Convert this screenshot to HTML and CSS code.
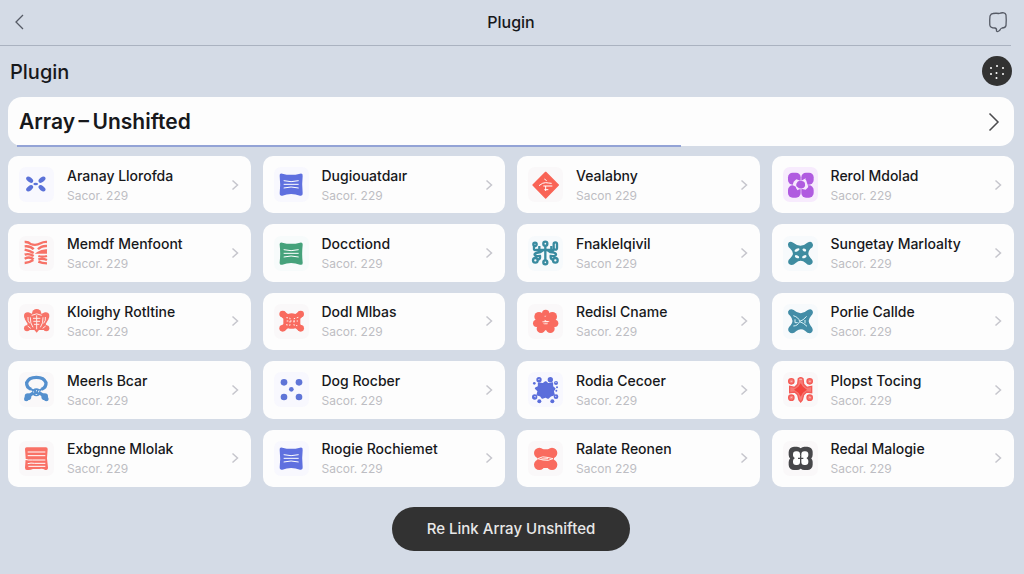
FILE: index.html
```html
<!DOCTYPE html>
<html lang="en">
<head>
<meta charset="utf-8">
<meta name="viewport" content="width=device-width, initial-scale=1">
<title>Plugin</title>
<link rel="stylesheet" href="styles.css">
</head>
<body>
<svg class="defs" aria-hidden="true">
  <symbol id="chevron" viewBox="0 0 8 12"><path d="M1.500 1.500 6.500 6l-5 4.500"/></symbol>
  <symbol id="scroll" viewBox="0 0 105 105">
    <path fill="currentColor" d="M17 26Q16 18 25 20Q51 27 78 20Q87 18 86 27Q83 52 86 79Q87 88 78 86Q51 76 25 86Q16 88 17 79Q20 52 17 26Z"/>
    <path class="cut" d="M29 41Q51 47 74 41M29 52H74M29 63Q51 57 74 63"/>
  </symbol>
</svg>
<div class="page">
  <header class="topbar">
    <button class="icon-button" type="button" aria-label="Back"><svg width="12" height="18" viewBox="0 0 12 18"><path d="M9 2 2 9 9 16"/></svg></button>
    <span class="topbar-title">Plugin</span>
    <button class="icon-button" type="button" aria-label="Messages"><svg width="20" height="22" viewBox="0 0 20 22"><path d="M5 2.500Q8 2 11 2.500Q17 .5 18 4Q18.500 9 18 14.500Q17.500 17 14 17Q12.500 17.500 12 19Q9.500 21.500 8.500 20Q9 17.500 7 17Q2 17 1.800 14Q1.500 9 2 5Q3 2.500 5 2.500Z"/></svg></button>
  </header>
  <div class="heading">
    <h1>Plugin</h1>
    <button class="round" type="button" aria-label="More options"><svg width="30" height="30" viewBox="0 0 30 30" fill="#fff"><circle cx="9" cy="12" r="1"/><circle cx="15" cy="10" r="1"/><circle cx="21" cy="12" r="1"/><circle cx="9" cy="18" r="1"/><circle cx="14.500" cy="17" r="1"/><circle cx="21" cy="18" r="1"/><circle cx="14.500" cy="22" r="1"/></svg></button>
  </div>
  <a class="banner" href="#"><span>Array&thinsp;–&thinsp;Unshifted</span><svg width="12" height="20" viewBox="0 0 12 20"><path d="M1.500 1.500 10 10 1.500 18.500"/></svg></a>
  <main class="grid">
    <a class="card" href="#"><svg class="tile lilac" viewBox="0 0 105 105" fill="#5b72d8"><ellipse cx="32" cy="38" rx="12" ry="7" transform="rotate(38 32 38)"/><ellipse cx="69" cy="38" rx="12" ry="7" transform="rotate(-38 69 38)"/><ellipse cx="32" cy="64" rx="12" ry="7" transform="rotate(-38 32 64)"/><ellipse cx="69" cy="64" rx="12" ry="7" transform="rotate(38 69 64)"/><ellipse cx="50" cy="51" rx="7" ry="4"/></svg><span class="text"><b>Aranay Llorofda</b><small>Sacor. 229</small></span><svg class="chev"><use href="#chevron"/></svg></a>
    <a class="card" href="#"><svg class="tile lilac indigo" viewBox="0 0 105 105"><use href="#scroll"/></svg><span class="text"><b>Dugiouatdaır</b><small>Sacor. 229</small></span><svg class="chev"><use href="#chevron"/></svg></a>
    <a class="card" href="#"><svg class="tile" viewBox="0 0 105 105"><path fill="#f96456" stroke="#f96456" stroke-width="4" stroke-linejoin="round" d="M53 16 91 54 53 93 15 54Z"/><path class="cut" d="M49 36 56 41M33 56Q45 46 53 47T71 49M46 57H73M53 57V72M49 68H61"/></svg><span class="text"><b>Vealabny</b><small>Sacon 229</small></span><svg class="chev"><use href="#chevron"/></svg></a>
    <a class="card" href="#"><svg class="tile violet" viewBox="0 0 105 105"><g fill="#b05be0"><rect x="15" y="17" width="38" height="36" rx="14"/><rect x="55" y="17" width="37" height="36" rx="14"/><rect x="15" y="55" width="38" height="37" rx="14"/><rect x="55" y="55" width="37" height="37" rx="14"/></g><path fill="#f7e9fd" d="M32 44 40 37 54 42 68 34 72 48 76 60 68 68 54 65 42 70 38 59 29 54Z"/><path fill="#b05be0" d="M40 50Q45 39 53 42Q64 40 66 50Q68 61 58 64Q49 66 43 60Q38 57 40 50ZM66 36 72 34V41ZM37 64V72L43 69Z"/></svg><span class="text"><b>Rerol Mdolad</b><small>Sacor. 229</small></span><svg class="chev"><use href="#chevron"/></svg></a>

    <a class="card" href="#"><svg class="tile" viewBox="0 0 105 105" fill="none" stroke="#f77267" stroke-width="7"><path d="M17 18Q28 17 35 24Q50 30 65 22Q74 17 84 18M17 31Q35 29 44 40M84 30Q66 29 57 40M17 41Q34 45 44 51M84 43Q69 42 58 50H84M17 56Q30 51 44 60M58 60Q70 64 84 60M17 68Q32 60 44 70M84 72Q71 66 58 70M17 81Q31 80 43 72M84 82Q69 82 58 77"/></svg><span class="text"><b>Memdf Menfoont</b><small>Sacor. 229</small></span><svg class="chev"><use href="#chevron"/></svg></a>
    <a class="card" href="#"><svg class="tile mint" viewBox="0 0 105 105"><use href="#scroll"/></svg><span class="text"><b>Docctiond</b><small>Sacor. 229</small></span><svg class="chev"><use href="#chevron"/></svg></a>
    <a class="card" href="#"><svg class="tile ice" viewBox="0 0 105 105" fill="none" stroke="#398ba0" stroke-width="7"><circle cx="21" cy="25" r="5"/><circle cx="52" cy="23" r="6"/><rect x="77" y="19" width="10" height="22" rx="5"/><circle cx="22" cy="73" r="7"/><circle cx="52" cy="79" r="6"/><circle cx="82" cy="73" r="7"/><path d="M18 29V40Q19 43 26 42H78M52 30V72M28 71Q38 71 36 60Q18 62 20 54Q24 50 38 48L46 42M58 42 66 48Q84 50 84 55Q84 62 68 60Q67 71 76 71M34 40V30M70 40V30"/></svg><span class="text"><b>Fnaklelqivil</b><small>Sacon 229</small></span><svg class="chev"><use href="#chevron"/></svg></a>
    <a class="card" href="#"><svg class="tile ice" viewBox="0 0 105 105"><path fill="#3e8ca0" d="M15 24Q18 12 32 21Q53 38 73 20Q87 12 90 26Q91 33 82 38Q70 52 82 65Q94 76 86 84Q77 92 68 81Q53 67 38 81Q28 92 18 84Q11 75 23 65Q37 52 22 38Q14 33 15 24Z"/><g fill="#f3fafb"><ellipse cx="42" cy="42" rx="8" ry="4" transform="rotate(-25 42 42)"/><ellipse cx="64" cy="42" rx="6" ry="4" transform="rotate(30 64 42)"/><ellipse cx="42" cy="62" rx="7" ry="4" transform="rotate(25 42 62)"/><ellipse cx="64" cy="62" rx="7" ry="4" transform="rotate(-25 64 62)"/></g></svg><span class="text"><b>Sungetay Marloalty</b><small>Sacor. 229</small></span><svg class="chev"><use href="#chevron"/></svg></a>

    <a class="card" href="#"><svg class="tile" viewBox="0 0 105 105"><g fill="#f77368"><circle cx="53" cy="29" r="14"/><circle cx="26" cy="36" r="11"/><circle cx="80" cy="36" r="11"/><circle cx="24" cy="73" r="9"/><circle cx="82" cy="73" r="9"/><path d="M27 26 42 30H64L79 26 89 45 80 60 86 70 75 78 60 78 53 86 46 78 31 78 20 70 26 60 17 45Z"/></g><path fill="none" stroke="#fdebe8" stroke-width="3" d="M38 34Q53 25 68 34M34 40Q33 58 42 70M72 40Q73 58 64 70M53 34V76M42 43H64M43 52H63M45 61H61M27 39Q25 50 32 58M79 39Q81 50 74 58M26 66 35 73M80 66 71 73"/></svg><span class="text"><b>Kloiıghy Rotltine</b><small>Sacor. 229</small></span><svg class="chev"><use href="#chevron"/></svg></a>
    <a class="card" href="#"><svg class="tile" viewBox="0 0 105 105"><g fill="#f96b5f"><circle cx="26" cy="30" r="10"/><circle cx="80" cy="30" r="10"/><circle cx="26" cy="73" r="10"/><circle cx="80" cy="73" r="10"/><path d="M30 22 42 30Q53 25 64 30L76 22 87 37 79 44V61L87 68 77 82 64 73Q53 76 42 73L30 82 19 68 28 60V44L19 36Z"/></g><path fill="none" stroke="#fff0ec" stroke-width="3" stroke-dasharray="5 5" d="M37 41 48 42V64L36 62M73 40 60 44V64L70 65M38 51H72"/></svg><span class="text"><b>Dodl Mlbas</b><small>Sacor. 229</small></span><svg class="chev"><use href="#chevron"/></svg></a>
    <a class="card" href="#"><svg class="tile" viewBox="0 0 105 105"><g fill="#f96b5f"><circle cx="53" cy="28" r="11"/><circle cx="33" cy="38" r="14"/><circle cx="73" cy="38" r="14"/><circle cx="26" cy="58" r="11"/><circle cx="80" cy="58" r="11"/><circle cx="39" cy="74" r="13"/><circle cx="67" cy="74" r="13"/><circle cx="53" cy="54" r="25"/></g><path fill="#fff1ed" d="M41 54Q45 51 50 52V47L56 51Q62 50 65 53Q54 56 41 54ZM44 59Q55 56 61 59Q54 63 44 59ZM48 36 55 35 52 38Z"/></svg><span class="text"><b>Redisl Cname</b><small>Sacor. 229</small></span><svg class="chev"><use href="#chevron"/></svg></a>
    <a class="card" href="#"><svg class="tile ice" viewBox="0 0 105 105"><path fill="#438da7" d="M15 23Q20 12 32 18Q53 37 73 19Q87 11 90 24Q90 31 84 36Q71 50 83 65Q93 76 87 84Q79 93 66 80Q53 71 40 81Q28 93 18 83Q11 75 23 64Q34 50 22 36Q14 31 15 23Z"/><path fill="none" stroke="#d9f3f8" stroke-width="3" d="M31 35Q47 40 50 52Q60 50 71 37M31 66Q44 66 50 53Q61 56 72 67M36 46V56H44M66 48V58"/></svg><span class="text"><b>Porlie Callde</b><small>Sacor. 229</small></span><svg class="chev"><use href="#chevron"/></svg></a>

    <a class="card" href="#"><svg class="tile" viewBox="0 0 105 105"><g fill="none" stroke="#5590ce" stroke-width="10"><path d="M36 52Q22 46 23 32Q29 16 52 16Q75 16 81 32Q82 46 68 52"/><path d="M26 74 49 59M79 74 55 59"/><path stroke-width="6" d="M33 50 44 56M71 50 60 56"/></g><g fill="#5590ce"><circle cx="52" cy="61" r="12"/><circle cx="27" cy="74" r="10"/><circle cx="77" cy="74" r="10"/><circle cx="22" cy="81" r="7"/><circle cx="82" cy="81" r="7"/></g><path fill="#f7fafd" d="M42 57 46 60 44 63ZM57 57 62 55 59 62ZM48 66H56L52 69ZM51 55H54V58H51Z"/></svg><span class="text"><b>Meerls Bcar</b><small>Sacor. 229</small></span><svg class="chev"><use href="#chevron"/></svg></a>
    <a class="card" href="#"><svg class="tile lilac" viewBox="0 0 105 105" fill="#5f75d7"><circle cx="30" cy="31" r="10"/><circle cx="75" cy="31" r="10"/><circle cx="52" cy="52" r="7"/><circle cx="30" cy="75" r="10"/><circle cx="75" cy="75" r="10"/></svg><span class="text"><b>Dog Rocber</b><small>Sacor. 229</small></span><svg class="chev"><use href="#chevron"/></svg></a>
    <a class="card" href="#"><svg class="tile lilac" viewBox="0 0 105 105" fill="#5b6edb"><path d="M53 30 60 36 73 33 73 44 80 50 75 57 78 68 68 71 60 78 53 74 43 78 38 71 28 68 31 57 23 49 32 44 32 33 45 36Z" stroke="#5b6edb" stroke-width="5" stroke-linejoin="round"/><circle cx="33" cy="23" r="8"/><circle cx="67" cy="23" r="8"/><circle cx="19" cy="34" r="4"/><circle cx="84" cy="33" r="6"/><circle cx="20" cy="75" r="8"/><circle cx="84" cy="74" r="7"/><circle cx="34" cy="88" r="6"/><circle cx="73" cy="88" r="6"/><circle cx="87" cy="46" r="3"/><circle cx="85" cy="56" r="3"/><path fill="#f4f4ff" d="M29 22 35 20 34 24ZM18 73 23 72 22 77ZM82 29 87 31 83 33ZM82 71 86 73 82 76Z"/></svg><span class="text"><b>Rodia Cecoer</b><small>Sacor. 229</small></span><svg class="chev"><use href="#chevron"/></svg></a>
    <a class="card" href="#"><svg class="tile" viewBox="0 0 105 105"><g fill="#f77b76" stroke="#f45b56" stroke-width="4"><circle cx="25" cy="28" r="8"/><circle cx="80" cy="28" r="8"/><circle cx="25" cy="77" r="8"/><circle cx="80" cy="77" r="8"/><path d="M46 20Q53 14 60 20L62 37 71 46 86 43V62L71 60 62 68 58 84 53 90 48 84 44 68 35 60 20 62V43L35 46 44 37Z"/></g><path fill="#f3463f" d="M53 34 60 44 72 53 60 62 53 74 46 62 33 53 46 44Z"/><path fill="none" stroke="#fde6e4" stroke-width="2" d="M23 28H28M78 28H83M23 77 28 75M78 75 83 77M49 22H57"/></svg><span class="text"><b>Plopst Tocing</b><small>Sacor. 229</small></span><svg class="chev"><use href="#chevron"/></svg></a>

    <a class="card" href="#"><svg class="tile" viewBox="0 0 105 105"><path fill="#f97166" d="M18 24Q18 18 25 19H79Q86 18 86 24L84 52 87 80Q87 87 79 87Q70 82 62 84H42Q34 88 25 87Q18 88 18 80L20 52Z"/><path class="cut" d="M26 33H79M26 44H79M18 55Q28 58 40 57H79M26 68Q36 65 46 67H79M28 76H79"/></svg><span class="text"><b>Exbgnne Mlolak</b><small>Sacor. 229</small></span><svg class="chev"><use href="#chevron"/></svg></a>
    <a class="card" href="#"><svg class="tile lilac indigo" viewBox="0 0 105 105"><use href="#scroll"/></svg><span class="text"><b>Rıogie Rochiemet</b><small>Sacor. 229</small></span><svg class="chev"><use href="#chevron"/></svg></a>
    <a class="card" href="#"><svg class="tile" viewBox="0 0 105 105"><g fill="#f96b5f"><circle cx="34" cy="36" r="16"/><circle cx="72" cy="36" r="16"/><circle cx="34" cy="71" r="16"/><circle cx="72" cy="71" r="16"/><path d="M35 25H71L78 53 70 81H36L28 53Z"/></g><path fill="none" stroke="#fff1ed" stroke-width="3" d="M29 53Q45 44 57 49L75 53Q61 61 45 57ZM40 54 60 53"/></svg><span class="text"><b>Ralate Reonen</b><small>Sacon 229</small></span><svg class="chev"><use href="#chevron"/></svg></a>
    <a class="card" href="#"><svg class="tile" viewBox="0 0 105 105"><g fill="#47474a"><rect x="17" y="17" width="41" height="40" rx="16"/><rect x="48" y="17" width="41" height="40" rx="16"/><rect x="17" y="47" width="41" height="40" rx="16"/><rect x="48" y="47" width="41" height="40" rx="16"/></g><g fill="#fff"><rect x="30" y="31" width="21" height="20" rx="9"/><rect x="55" y="31" width="21" height="20" rx="9"/><rect x="30" y="52" width="21" height="20" rx="9"/><rect x="55" y="52" width="21" height="20" rx="9"/><path d="M35 44H71V60H35Z"/></g><path stroke="#47474a" stroke-width="4" d="M45 52H61M53 44V60"/></svg><span class="text"><b>Redal Malogie</b><small>Sacor. 229</small></span><svg class="chev"><use href="#chevron"/></svg></a>
  </main>
  <footer class="footer"><button class="primary" type="button">Re Link Array Unshifted</button></footer>
</div>
</body>
</html>
```
FILE: styles.css
```css
* { box-sizing: border-box; }
body {
  margin: 0;
  background: #d4dbe6;
  color: #17181b;
  font-family: Inter, "Liberation Sans", sans-serif;
}
a { color: inherit; text-decoration: none; }
button { border: 0; padding: 0; background: none; color: inherit; font: inherit; cursor: pointer; }
svg { display: block; flex: none; }
.defs { position: absolute; width: 0; height: 0; }
.page { display: flex; flex-direction: column; min-height: 100vh; padding: 0 10px 0 8px; }

.topbar {
  display: grid;
  grid-template-columns: 1fr auto 1fr;
  align-items: center;
  height: 46px;
  margin: 0 3px 0 -8px;
  padding: 0 3px 2px 14px;
  border-bottom: 1px solid #aab2c0;
}
.icon-button:last-child { justify-self: end; }
.icon-button:first-child { justify-self: start; }
.icon-button svg { fill: none; stroke: #555a65; stroke-width: 1.3; }
.topbar-title { font-size: 16px; font-weight: 500; }

.heading { display: flex; align-items: center; justify-content: space-between; height: 51px; padding: 0 2px 2px; }
h1 { margin: 3px 0 0; font-size: 20px; line-height: 24px; font-weight: 500; }
.round { border-radius: 50%; background: #323232; }

.banner {
  position: relative;
  display: flex;
  align-items: center;
  justify-content: space-between;
  height: 49px;
  padding: 0 14px 0 11px;
  border-radius: 14px;
  background: #fdfdfd;
  font-size: 21px;
  font-weight: 600;
}
.banner svg { fill: none; stroke: #4b4b4e; stroke-width: 1.5; }
.banner::after {
  content: "";
  position: absolute;
  left: 9px;
  bottom: -1px;
  width: 66%;
  height: 2px;
  background: #93a3d6;
}

.grid {
  display: grid;
  flex: 1;
  grid-template-columns: repeat(4, 1fr);
  grid-auto-rows: 1fr;
  gap: 11px 12px;
  padding: 10px 0 20px;
}
.card {
  display: flex;
  align-items: center;
  min-width: 0;
  padding: 0 12px 0 11px;
  border-radius: 10px;
  background: #fdfdfd;
}
.tile { width: 35px; height: 35px; border-radius: 7px; background: #faf8f9; }
.lilac { background: #f8f8fe; }
.indigo { color: #5f70df; }
.mint { color: #45a27b; background: #f7fbfb; }
.ice { background: #f7fafc; }
.violet { background: #f7ebfd; }
.cut { fill: none; stroke: #fff; stroke-width: 3; }
.text { flex: 1; min-width: 0; padding: 2px 0 0 13px; white-space: nowrap; }
.text b, .text small { display: block; line-height: 20px; }
.text b { font-size: 14px; font-weight: 500; }
.text small { font-size: 12px; color: #bdbdc3; }
.chev { width: 8px; height: 12px; fill: none; stroke: #c6c6cd; stroke-width: 1.5; }

.footer { display: flex; justify-content: center; padding: 0 0 23px; }
.primary {
  padding: 12px 35px;
  border-radius: 22px;
  background: #323232;
  color: #e8e8e8;
  font-size: 15px;
  line-height: 20px;
  font-weight: 500;
}
```
